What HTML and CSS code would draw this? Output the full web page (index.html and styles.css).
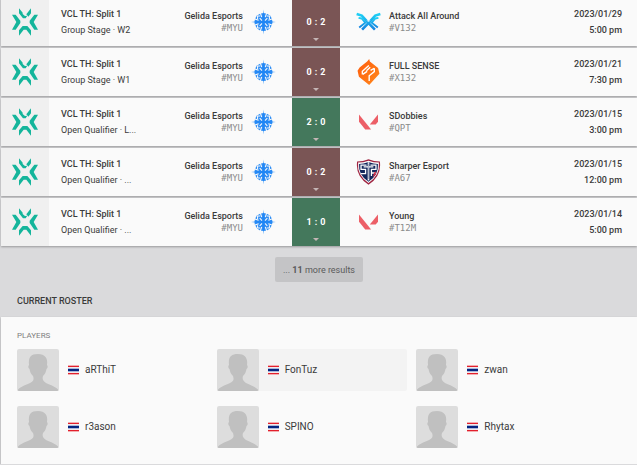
FILE: index.html
```html
<!DOCTYPE html>
<html lang="en">

<head>
    <meta charset="UTF-8">
    <meta name="viewport" content="width=device-width, initial-scale=1.0">
    <title>Gelida Esports</title>
    <link rel="stylesheet" href="styles.css">
</head>

<body>
    <!-- shared icons -->
    <svg class="sprite" aria-hidden="true">
        <linearGradient id="blue" x1="0" y1="0" x2="0" y2="1">
            <stop offset="0" stop-color="#1fd0f5" />
            <stop offset="1" stop-color="#1583e0" />
        </linearGradient>
        <linearGradient id="orange" x1="0" y1="0" x2="1" y2="1">
            <stop offset="0" stop-color="#ff5a0a" />
            <stop offset="1" stop-color="#ff8a1e" />
        </linearGradient>
        <symbol id="vct" viewBox="0 0 78 84">
            <g fill="#14b59b">
                <path d="M21 1L32 14V18L39 24L46 23L41 31H33L21 16Z" />
                <path d="M57 1V16L49 26L43 19Z" />
                <path d="M0 20H11L25 38V45L11 65H0L13 42Z" />
                <path d="M78 20H67L53 38V45L67 65H78L65 42Z" />
                <path d="M21 83V67L32 54H46L57 67V83L43 65H35Z" />
            </g>
        </symbol>
        <symbol id="gelida" viewBox="0 0 72 72">
            <circle cx="36" cy="36" r="26" fill="#2b8cf5" />
            <g stroke="#fafafa" fill="none">
                <path d="M26 8L31 22M46 8L41 22M26 64L31 50M46 64L41 50M8 26L22 31M8 46L22 41M64 26L50 31M64 46L50 41" stroke-width="3" />
                <path d="M19 27V19H27M45 19H53V27M53 45V53H45M27 53H19V45" stroke-width="3" />
                <path d="M25 25L32 32M47 25L40 32M25 47L32 40M47 47L40 40" stroke-width="3" />
            </g>
            <path d="M36 0L39 33L72 36L39 39L36 72L33 39L0 36L33 33Z" fill="#1f86f5" />
        </symbol>
        <symbol id="attack" viewBox="0 0 78 60">
            <g fill="none" stroke="url(#blue)">
                <path d="M2 5L18 10L40 34L59 54" stroke-width="8" />
                <path d="M76 5L60 10L38 34L19 54" stroke-width="8" />
                <path d="M8 17L18 19L29 32L10 47" stroke-width="6" />
                <path d="M70 17L60 19L49 32L68 47" stroke-width="6" />
            </g>
            <path d="M34 24L39 30L44 24" fill="none" stroke="#fafafa" stroke-width="2" />
        </symbol>
        <symbol id="fullsense" viewBox="0 0 64 76">
            <path d="M34 0L36 7L60 26L64 43L34 76L4 52L0 34L6 25L28 7Z" fill="url(#orange)" />
            <path d="M14 45V36L33 19M26 34L37 24M49 27V37L34 49V64M38 33L49 27M15 45L28 36" fill="none" stroke="#fff" stroke-width="4" />
        </symbol>
        <symbol id="valorant" viewBox="0 0 58 46">
            <path d="M0 0L37 46H19L0 22Z" fill="#ec5f67" />
            <path d="M58 0V22L51 31H33Z" fill="#ec5f67" />
        </symbol>
        <symbol id="sharper" viewBox="0 0 74 80">
            <path d="M37 1Q54 8 72 8Q78 52 37 79Q-4 52 2 8Q20 8 37 1Z" fill="#9f2441" />
            <path d="M37 5Q54 11 69 11Q73 50 37 74Q1 50 5 11Q20 11 37 5Z" fill="#fff" />
            <path d="M37 9Q53 15 66 15Q69 49 37 70Q5 49 8 15Q21 15 37 9Z" fill="#12275c" />
            <path d="M31 19H14V32H28V45H14M43 19H60V32H46V52M46 43H60M22 24H52" fill="none" stroke="#fff" stroke-width="4" />
            <path d="M37 10V66" stroke="#fff" stroke-width="5" />
            <path d="M37 14V62" stroke="#12275c" stroke-width="1" />
            <path d="M50 56L54 42L61 38L58 49Z" fill="#d22b45" />
        </symbol>
        <symbol id="avatar" viewBox="0 0 42 42">
            <path fill="#c0c0c0" d="M0 42C2 38 9 36 13 34C17 32 17 30 16 27C14 25 13 23 12.500 20C11 19 11 17 12 16C11 8 14 5 21 5C28 5 31 9 30 16C31 17 31 19 29.500 20C29 23 28 25 26 27C25 30 26 32 29 34C33 36 40 38 42 42Z" />
        </symbol>
        <symbol id="thai" viewBox="0 0 11 10">
            <path fill="#f3e9ea" d="M0 0H11V10H0Z" />
            <path fill="#f3aeb0" d="M0 0H11V1H0ZM0 9H11V10H0Z" />
            <path fill="#e21f2d" d="M0 1H11V2H0ZM0 8H11V9H0Z" />
            <path fill="#a9b7dc" d="M0 3H11V4H0ZM0 6H11V7H0Z" />
            <path fill="#05247f" d="M0 4H11V6H0Z" />
        </symbol>
    </svg>

    <div class="matches">
        <div class="match">
            <div class="logo"><svg class="vct"><use href="#vct" /></svg></div>
            <div class="event">
                <a href="#">VCL TH: Split 1</a>
                <p>Group Stage · W2</p>
            </div>
            <div class="team left">
                <div>
                    <a href="#">Gelida Esports</a>
                    <p class="tag">#MYU</p>
                </div>
                <svg class="team-logo"><use href="#gelida" /></svg>
            </div>
            <button class="score loss" type="button">0 <i>:</i> 2</button>
            <div class="team">
                <svg class="team-logo"><use href="#attack" /></svg>
                <div>
                    <a href="#">Attack All Around</a>
                    <p class="tag">#V132</p>
                </div>
            </div>
            <div class="date">
                <p>2023/01/29</p>
                <p>5:00 pm</p>
            </div>
        </div>

        <div class="match">
            <div class="logo"><svg class="vct"><use href="#vct" /></svg></div>
            <div class="event">
                <a href="#">VCL TH: Split 1</a>
                <p>Group Stage · W1</p>
            </div>
            <div class="team left">
                <div>
                    <a href="#">Gelida Esports</a>
                    <p class="tag">#MYU</p>
                </div>
                <svg class="team-logo"><use href="#gelida" /></svg>
            </div>
            <button class="score loss" type="button">0 <i>:</i> 2</button>
            <div class="team">
                <svg class="team-logo"><use href="#fullsense" /></svg>
                <div>
                    <a href="#">FULL SENSE</a>
                    <p class="tag">#X132</p>
                </div>
            </div>
            <div class="date">
                <p>2023/01/21</p>
                <p>7:30 pm</p>
            </div>
        </div>

        <div class="match">
            <div class="logo"><svg class="vct"><use href="#vct" /></svg></div>
            <div class="event">
                <a href="#">VCL TH: Split 1</a>
                <p>Open Qualifier · L...</p>
            </div>
            <div class="team left">
                <div>
                    <a href="#">Gelida Esports</a>
                    <p class="tag">#MYU</p>
                </div>
                <svg class="team-logo"><use href="#gelida" /></svg>
            </div>
            <button class="score win" type="button">2 <i>:</i> 0</button>
            <div class="team">
                <svg class="team-logo small"><use href="#valorant" /></svg>
                <div>
                    <a href="#">SDobbies</a>
                    <p class="tag">#QPT</p>
                </div>
            </div>
            <div class="date">
                <p>2023/01/15</p>
                <p>3:00 pm</p>
            </div>
        </div>

        <div class="match">
            <div class="logo"><svg class="vct"><use href="#vct" /></svg></div>
            <div class="event">
                <a href="#">VCL TH: Split 1</a>
                <p>Open Qualifier · ...</p>
            </div>
            <div class="team left">
                <div>
                    <a href="#">Gelida Esports</a>
                    <p class="tag">#MYU</p>
                </div>
                <svg class="team-logo"><use href="#gelida" /></svg>
            </div>
            <button class="score loss" type="button">0 <i>:</i> 2</button>
            <div class="team">
                <svg class="team-logo"><use href="#sharper" /></svg>
                <div>
                    <a href="#">Sharper Esport</a>
                    <p class="tag">#A67</p>
                </div>
            </div>
            <div class="date">
                <p>2023/01/15</p>
                <p>12:00 pm</p>
            </div>
        </div>

        <div class="match">
            <div class="logo"><svg class="vct"><use href="#vct" /></svg></div>
            <div class="event">
                <a href="#">VCL TH: Split 1</a>
                <p>Open Qualifier · ...</p>
            </div>
            <div class="team left">
                <div>
                    <a href="#">Gelida Esports</a>
                    <p class="tag">#MYU</p>
                </div>
                <svg class="team-logo"><use href="#gelida" /></svg>
            </div>
            <button class="score win" type="button">1 <i>:</i> 0</button>
            <div class="team">
                <svg class="team-logo small"><use href="#valorant" /></svg>
                <div>
                    <a href="#">Young</a>
                    <p class="tag">#T12M</p>
                </div>
            </div>
            <div class="date">
                <p>2023/01/14</p>
                <p>5:00 pm</p>
            </div>
        </div>
    </div>

    <button class="more" type="button">... <b>11</b> more results</button>

    <h2>CURRENT ROSTER</h2>
    <div class="roster">
        <h3>PLAYERS</h3>
        <div class="players">
            <a class="player" href="#">
                <svg class="avatar"><use href="#avatar" /></svg>
                <svg class="flag"><use href="#thai" /></svg>
                <span>aRThiT</span>
            </a>
            <a class="player active" href="#">
                <svg class="avatar"><use href="#avatar" /></svg>
                <svg class="flag"><use href="#thai" /></svg>
                <span>FonTuz</span>
            </a>
            <a class="player" href="#">
                <svg class="avatar"><use href="#avatar" /></svg>
                <svg class="flag"><use href="#thai" /></svg>
                <span>zwan</span>
            </a>
            <a class="player" href="#">
                <svg class="avatar"><use href="#avatar" /></svg>
                <svg class="flag"><use href="#thai" /></svg>
                <span>r3ason</span>
            </a>
            <a class="player" href="#">
                <svg class="avatar"><use href="#avatar" /></svg>
                <svg class="flag"><use href="#thai" /></svg>
                <span>SPINO</span>
            </a>
            <a class="player" href="#">
                <svg class="avatar"><use href="#avatar" /></svg>
                <svg class="flag"><use href="#thai" /></svg>
                <span>Rhytax</span>
            </a>
        </div>
    </div>
</body>

</html>
```

FILE: styles.css
```css
* {
    padding: 0;
    margin: 0;
    box-sizing: border-box;
}

body {
    background: #dadadc;
    color: #3a3a3a;
    font-family: Roboto, "Liberation Sans", sans-serif;
    font-size: 9px;
    line-height: 12px;
    padding-left: 1px;
    overflow-x: hidden;
}

a {
    color: inherit;
    text-decoration: none;
}

button {
    border: none;
    font-family: inherit;
    cursor: pointer;
}

.sprite {
    position: absolute;
    width: 0;
    height: 0;
}

.matches {
    display: grid;
    gap: 2px;
    margin-top: -2px;
}

.match {
    display: grid;
    grid-template-columns: 48px 97px 1fr 48px 1fr 151px;
    height: 48px;
    background: #fafafa;
    box-shadow: 0 1px 2px rgba(0, 0, 0, 0.3);
}

.logo {
    display: flex;
    align-items: center;
    justify-content: center;
    background: #f0f0f0;
}

.vct {
    width: 26px;
    height: 28px;
}

.event {
    display: flex;
    flex-direction: column;
    justify-content: center;
    gap: 4px;
    padding-left: 12px;
    white-space: nowrap;
}

.event a,
.team a {
    display: block;
    font-weight: 500;
}

.team {
    display: flex;
    align-items: center;
    gap: 8px;
    padding: 0 16px;
    white-space: nowrap;
}

.left {
    justify-content: flex-end;
    text-align: right;
}

.team-logo {
    width: 25px;
    height: 26px;
}

.small {
    padding: 3px;
}

.tag {
    color: #8a8a8a;
    font-family: "DejaVu Sans Mono", monospace;
}

.score {
    display: flex;
    align-items: center;
    justify-content: center;
    gap: 3px;
    position: relative;
    color: #fff;
    font-size: 9px;
    font-weight: 700;
}

.score i {
    font-style: normal;
}

.score::after {
    content: "";
    position: absolute;
    left: 21px;
    bottom: 5px;
    border: 3px solid transparent;
    border-top-color: #c4b5b5;
    border-bottom: none;
}

.loss {
    background: #7a5555;
}

.win {
    background: #44785c;
}

.date {
    display: flex;
    flex-direction: column;
    justify-content: center;
    gap: 4px;
    padding-right: 15px;
    font-weight: 500;
    text-align: right;
}

.more {
    display: block;
    height: 25px;
    margin: 11px auto 0;
    padding: 0 8px;
    border-radius: 2px;
    background: #c4c4c6;
    color: #5a5a5a;
    font-size: 9px;
}

h2 {
    margin: 13px 0 0 16px;
    font-size: 9px;
    font-weight: 500;
}

.roster {
    margin-top: 10px;
    padding: 13px 30px 16px 16px;
    background: #fafafa;
    box-shadow: 0 1px 2px rgba(0, 0, 0, 0.3);
}

h3 {
    color: #808080;
    font-size: 8px;
    font-weight: 400;
}

.players {
    display: grid;
    grid-template-columns: repeat(3, 1fr);
    gap: 15px 9px;
    margin-top: 7px;
}

.player {
    display: flex;
    align-items: center;
    border-radius: 2px;
    font-size: 10px;
}

.active {
    background: #f3f3f3;
}

.avatar {
    width: 42px;
    height: 42px;
    border-radius: 2px;
    background: #dddddd;
}

.flag {
    width: 11px;
    height: 10px;
    margin: 0 6px 0 9px;
}
```
